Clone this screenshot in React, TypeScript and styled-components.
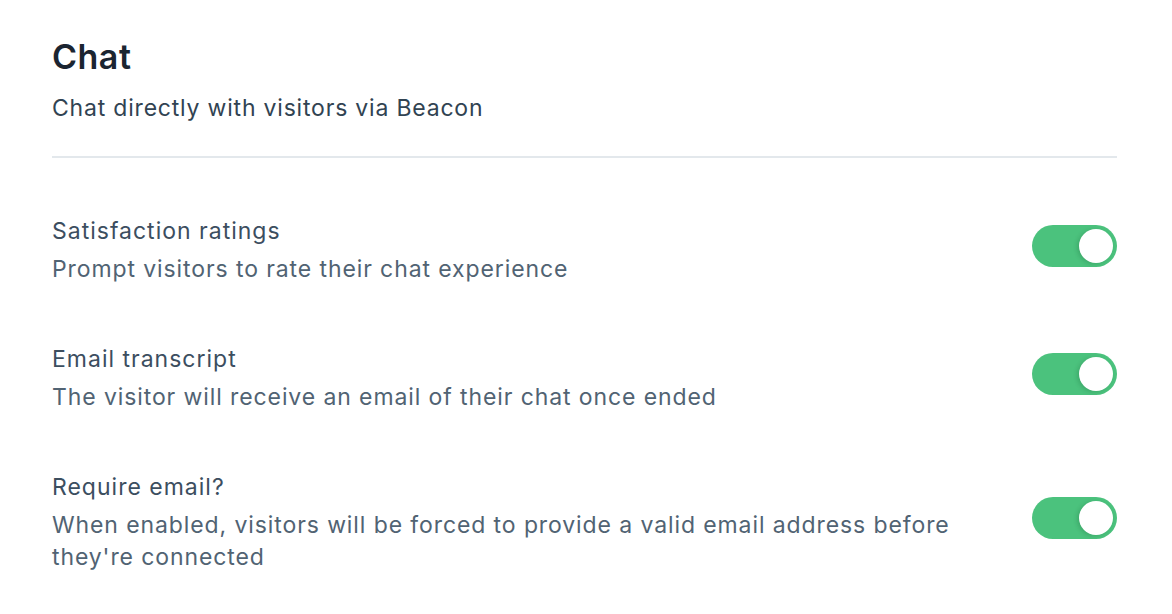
import React, { useState } from "react";
import styled, { createGlobalStyle } from "styled-components";

const GlobalStyle = createGlobalStyle`
  html, body {
    margin: 0;
    padding: 0;
    background: #ffffff;
  }
  body {
    font-family: Inter, "Noto Sans", "Liberation Sans", sans-serif;
    -webkit-font-smoothing: antialiased;
  }
`;

const Page = styled.div`
  width: 1172px;
  height: 614px;
  box-sizing: border-box;
  padding: 37px 55px 0 52px;
  background: #ffffff;
  overflow: hidden;
`;

const Header = styled.header`
  display: flex;
  flex-direction: column;
`;

const Title = styled.h1`
  margin: 0;
  font-size: 34px;
  line-height: 40px;
  font-weight: 600;
  color: #1b2531;
  letter-spacing: 0.5px;
`;

const Subtitle = styled.p`
  margin: 15px 0 0;
  font-size: 23px;
  line-height: 32px;
  font-weight: 400;
  letter-spacing: 0.8px;
  color: #314352;
`;

const Divider = styled.hr`
  margin: 32px 0 28px;
  border: none;
  height: 2px;
  background: #e3e8ec;
`;

const List = styled.div`
  display: flex;
  flex-direction: column;
`;

const Row = styled.div`
  display: flex;
  align-items: center;
  justify-content: space-between;
  gap: 40px;
  padding: 29px 0;
`;

const Text = styled.div`
  display: flex;
  flex-direction: column;
  max-width: 900px;
`;

const RowTitle = styled.div`
  font-size: 23px;
  line-height: 32px;
  letter-spacing: 1px;
  color: #3c4e5f;
`;

const RowDesc = styled.div`
  margin-top: 6px;
  font-size: 23px;
  line-height: 32px;
  letter-spacing: 0.9px;
  color: #516373;
`;

const Track = styled.button<{ $on: boolean }>`
  flex: none;
  position: relative;
  width: 85px;
  height: 42px;
  margin-bottom: 8px;
  padding: 0;
  border: none;
  border-radius: 21px;
  background: ${(p) => (p.$on ? "#4bc27d" : "#c7d0d8")};
  cursor: pointer;
  transition: background 0.2s;
`;

const Knob = styled.span<{ $on: boolean }>`
  position: absolute;
  top: 4px;
  left: ${(p) => (p.$on ? "47px" : "4px")};
  width: 34px;
  height: 34px;
  border-radius: 50%;
  background: #ffffff;
  box-shadow: -2px 1px 4px rgba(0, 60, 30, 0.18);
  transition: left 0.2s;
`;

type Setting = { title: string; desc: string };

const settings: Setting[] = [
  { title: "Satisfaction ratings", desc: "Prompt visitors to rate their chat experience" },
  { title: "Email transcript", desc: "The visitor will receive an email of their chat once ended" },
  {
    title: "Require email?",
    desc: "When enabled, visitors will be forced to provide a valid email address before they're connected",
  },
];

function Toggle({ on, onClick }: { on: boolean; onClick: () => void }) {
  return (
    <Track $on={on} onClick={onClick} role="switch" aria-checked={on}>
      <Knob $on={on} />
    </Track>
  );
}

export default function App() {
  const [state, setState] = useState<boolean[]>([true, true, true]);
  return (
    <>
      <GlobalStyle />
      <Page>
        <Header>
          <Title>Chat</Title>
          <Subtitle>Chat directly with visitors via Beacon</Subtitle>
        </Header>
        <Divider />
        <List>
          {settings.map((s, i) => (
            <Row key={s.title}>
              <Text>
                <RowTitle>{s.title}</RowTitle>
                <RowDesc>{s.desc}</RowDesc>
              </Text>
              <Toggle
                on={state[i]}
                onClick={() => setState((st) => st.map((v, j) => (j === i ? !v : v)))}
              />
            </Row>
          ))}
        </List>
      </Page>
    </>
  );
}
